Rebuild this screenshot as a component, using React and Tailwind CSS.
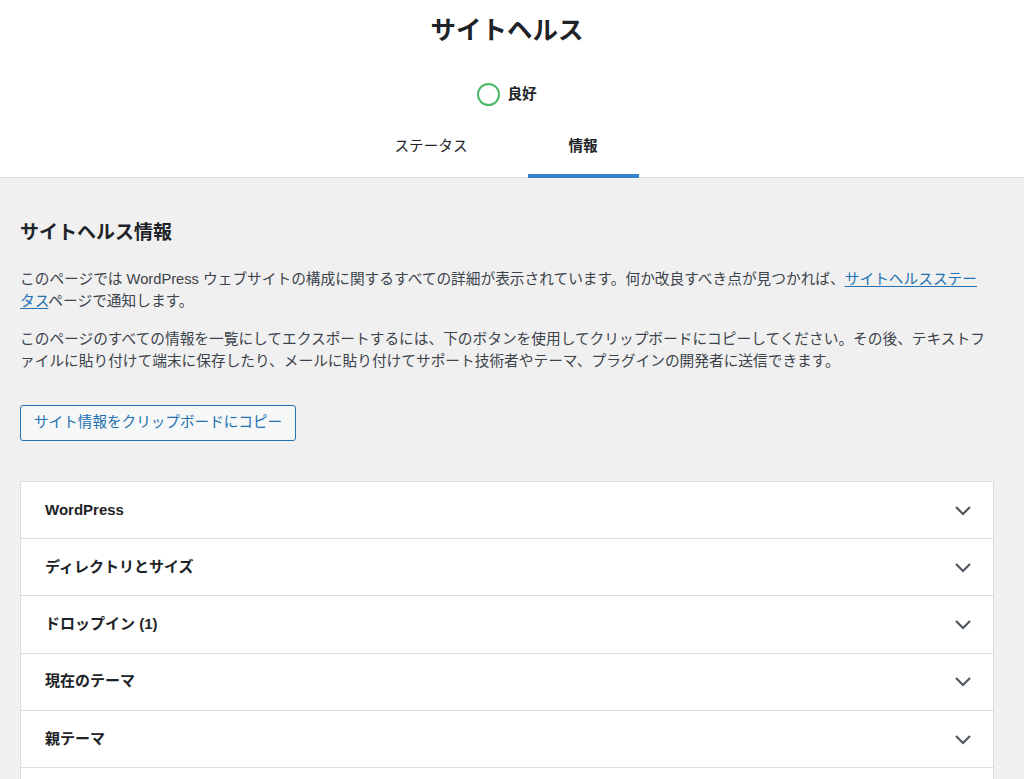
import React from "react";

const rows = [
  "WordPress",
  "ディレクトリとサイズ",
  "ドロップイン (1)",
  "現在のテーマ",
  "親テーマ",
  "停止中のテーマ (2)",
  "使用中のプラグイン (3)",
];

const Chevron = () => (
  <svg width="18" height="11" viewBox="0 0 18 11" fill="none" className="shrink-0">
    <path d="M2 2l7 7 7-7" stroke="#50575e" strokeWidth="2.2" />
  </svg>
);

const App = () => {
  return (
    <div
      className="min-h-screen bg-[#f0f0f1] text-[#3c434a]"
      style={{ fontFamily: '"Liberation Sans", "Noto Sans CJK JP", sans-serif' }}
    >
      <header className="bg-white border-b border-[#dcdcde]">
        <div className="w-[1014px] flex flex-col items-center pt-3">
          <h1 className="text-[25.5px] leading-[36px] font-bold text-[#1d2327]">サイトヘルス</h1>
          <div className="mt-[35px] h-[23px] flex items-center gap-[7px]">
            <span className="w-[23px] h-[23px] rounded-full border-2 border-[#4ab866]" />
            <span className="text-[14.6px] font-semibold text-[#1d2327]">良好</span>
          </div>
          <nav className="grid grid-cols-2 w-[304px]">
            <a className="mx-[20.5px] pt-[29px] pb-4 border-b-4 border-transparent text-center text-[14.6px] leading-[22px] text-[#1d2327]">
              ステータス
            </a>
            <a className="mx-[20.5px] pt-[29px] pb-4 border-b-4 border-[#3582c4] text-center text-[14.6px] leading-[22px] font-semibold text-[#1d2327] -mb-px">
              情報
            </a>
          </nav>
        </div>
      </header>

      <main className="w-[1014px] px-5 pt-[41px] pb-10">
        <h2 className="text-[19px] leading-[27px] font-semibold text-[#1d2327]">サイトヘルス情報</h2>
        <p className="mt-[23px] pr-[6px] text-[14.7px] leading-[21.5px]">
          このページでは WordPress ウェブサイトの構成に関するすべての詳細が表示されています。何か改良すべき点が見つかれば、
          <a className="text-[#2271b1] underline underline-offset-2">サイトヘルスステータス</a>
          ページで通知します。
        </p>
        <p className="mt-4 text-[14.7px] leading-[22px]">
          このページのすべての情報を一覧にしてエクスポートするには、下のボタンを使用してクリップボードにコピーしてください。その後、テキストファイルに貼り付けて端末に保存したり、メールに貼り付けてサポート技術者やテーマ、プラグインの開発者に送信できます。
        </p>
        <button
          type="button"
          className="mt-[33px] h-9 px-[13px] rounded-[3px] border border-[#2271b1] bg-[#f6f7f7] text-[#2271b1] text-[14.6px]"
        >
          サイト情報をクリップボードにコピー
        </button>

        <div className="mt-10 bg-white border border-[#dcdcde]">
          {rows.map((label, i) => (
            <div
              key={label}
              className={`flex items-center justify-between pl-6 pr-[21px] ${
                i > 0 ? "h-[57.3px] border-t border-[#dcdcde]" : "h-[56px]"
              }`}
            >
              <span className="text-[15px] font-semibold text-[#1d2327]">{label}</span>
              <Chevron />
            </div>
          ))}
        </div>
      </main>
    </div>
  );
};

export default App;
